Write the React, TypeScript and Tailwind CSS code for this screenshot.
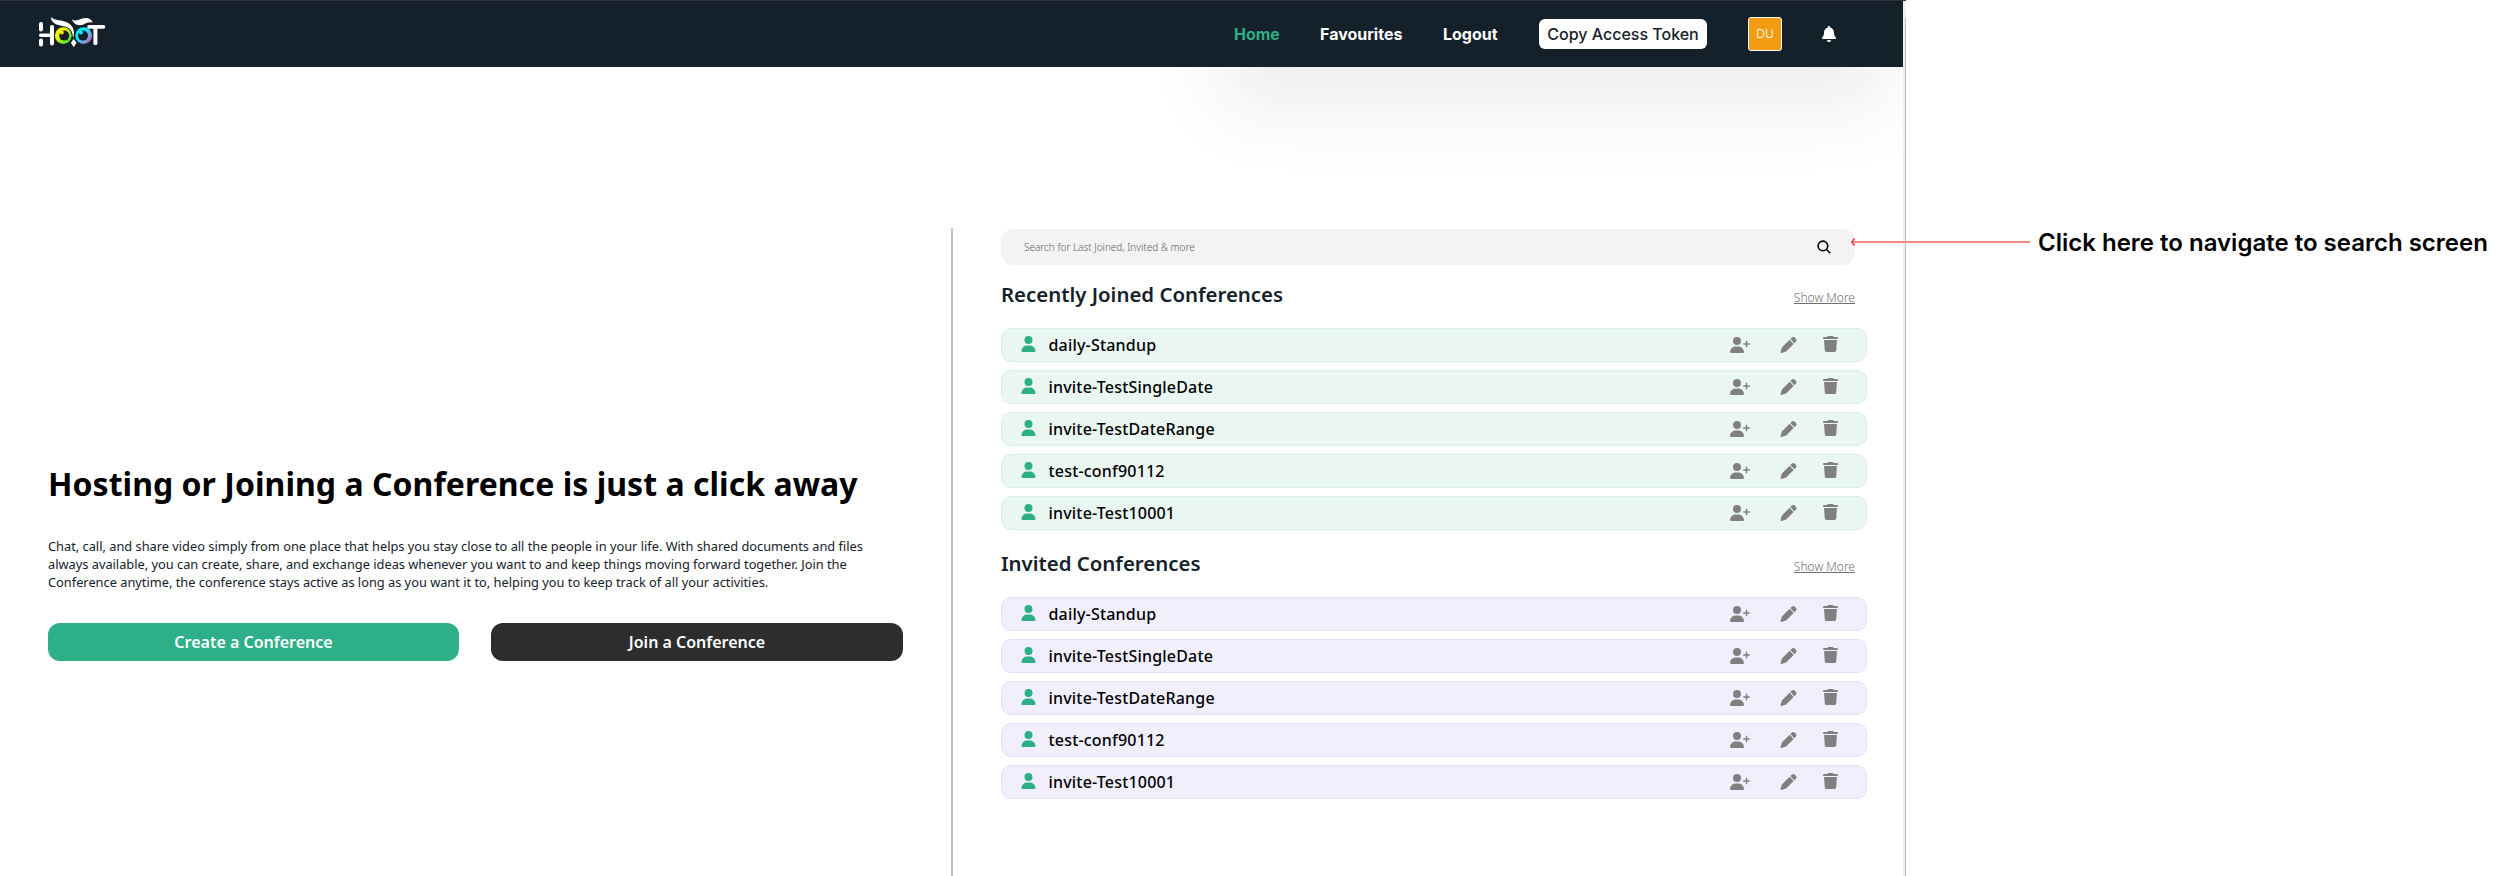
import { FaBell, FaPen, FaTrash, FaUser, FaUserPlus } from 'react-icons/fa6';

const conferences = ['daily-Standup', 'invite-TestSingleDate', 'invite-TestDateRange', 'test-conf90112', 'invite-Test10001'];

function Logo() {
  return (
    <svg width="70" height="34" viewBox="0 0 70 34" fill="none" aria-label="Hoot">
      <defs>
        <linearGradient id="eyeLeft" x1="20" y1="14" x2="34" y2="30" gradientUnits="userSpaceOnUse">
          <stop offset="0.3" stopColor="#f8f408" />
          <stop offset="0.7" stopColor="#7bea14" />
          <stop offset="1" stopColor="#19e035" />
        </linearGradient>
        <linearGradient id="eyeRight" x1="38" y1="14" x2="54" y2="30" gradientUnits="userSpaceOnUse">
          <stop offset="0.4" stopColor="#08ecf8" />
          <stop offset="0.7" stopColor="#7d9fdc" />
          <stop offset="0.95" stopColor="#e0489f" />
        </linearGradient>
      </defs>
      <g stroke="#fff" strokeWidth="4" strokeLinecap="round">
        <path d="M4 10v5.5M4 26.500v4" />
        <path d="M3.800 21.300H15" strokeWidth="3.600" />
        <path d="M15 13v16.500" />
        <path d="M52 12.900H66.500" strokeWidth="3.600" />
        <path d="M58.400 14V29.300" />
      </g>
      <circle cx="26.300" cy="21.600" r="8.400" fill="url(#eyeLeft)" />
      <circle cx="46.700" cy="21.600" r="8.400" fill="url(#eyeRight)" />
      <circle cx="27.200" cy="21.600" r="5" fill="#15212a" />
      <circle cx="46" cy="21.600" r="5" fill="#15212a" />
      <circle cx="24.800" cy="18.500" r="2" fill="#e9f20a" />
      <circle cx="44" cy="18.500" r="2" fill="#08ecf8" />
      <path
        d="M13.800 3c3.200 3 7.200 2.800 11.200 3.700C32 8.200 36.300 11.500 36.800 17.500c.1 2.500-.1 5-.6 6.500-.8-6-2-9.500-7.200-11.300C23 11 14.500 11.500 13.800 3Z"
        fill="#fff"
      />
      <path d="M36.700 25l2.800 3.700-2.800 4.500-2.800-4.500Z" fill="#fff" />
      <path d="M35 5.300c2.700 2.200 5.500 1.200 9-.2 4.500-1.700 9.500-1.700 11.800 3.400-4-.5-6.300.5-9.300 1.900-4.500 1.900-9.500.7-11.500-5.100Z" fill="#fff" />
    </svg>
  );
}

function Header() {
  return (
    <header className="relative flex h-[67px] w-[1903px] items-center border-t border-[#2e3140] bg-[#15212a] font-['Inter',sans-serif] text-base leading-6 text-white">
      <div className="mb-1.5 ml-[37px]">
        <Logo />
      </div>
      <nav className="ml-auto flex items-center">
        <a className="w-[86px] font-bold text-[#2db087]">Home</a>
        <a className="w-[123px] font-bold">Favourites</a>
        <a className="w-24 font-bold">Logout</a>
        <button className="h-[30px] w-[168px] rounded-[6px] bg-white font-medium text-[#15212a]">Copy Access Token</button>
        <div className="ml-[41px] flex h-[34px] w-[34px] items-center justify-center rounded-[3px] border border-white bg-[#f39c12] text-xs font-light">DU</div>
        <FaBell className="mr-[66px] ml-[39px] h-4 w-4" />
      </nav>
    </header>
  );
}

function SearchIcon() {
  return (
    <svg className="mr-px ml-auto" width="14" height="14" viewBox="0 0 14 14" fill="none" stroke="#000" strokeWidth="1.600">
      <circle cx="5.900" cy="5.900" r="4.800" />
      <path d="M9.300 9.300l4 4" />
    </svg>
  );
}

function ConferenceRow({ name, tone }: { name: string; tone: string }) {
  return (
    <li className={`flex h-[34px] items-center rounded-[10px] border ${tone}`}>
      <FaUser className="mb-0.5 ml-[19px] h-4 w-[15px] text-[#2db087]" />
      <span className="ml-[12.500px] text-base leading-6 font-medium tracking-[0.012em] text-black">{name}</span>
      <div className="ml-auto flex items-center text-[#808080]">
        <FaUserPlus className="h-4 w-5" />
        <FaPen className="ml-[30px] h-4 w-[17px]" />
        <FaTrash preserveAspectRatio="none" className="mr-[28px] mb-0.5 ml-[26px] h-4 w-[15px]" />
      </div>
    </li>
  );
}

function Section({ title, tone }: { title: string; tone: string }) {
  return (
    <section>
      <div className="flex h-[63px] w-[854px] items-start justify-between pt-[15px]">
        <h2 className="text-[20.400px] leading-7 font-semibold text-[#15212a]">{title}</h2>
        <a className="mt-[9px] text-xs leading-[18px] font-light text-[#707070] underline">Show More</a>
      </div>
      <ul className="flex flex-col gap-2">
        {conferences.map((name) => (
          <ConferenceRow key={name} name={name} tone={tone} />
        ))}
      </ul>
    </section>
  );
}

export default function App() {
  return (
    <div className="relative flex h-[876px] w-[2493px] overflow-hidden bg-white font-['Noto_Sans',sans-serif]">
      <div className="w-[1903px] shrink-0">
        <div className="absolute top-[67px] left-0 h-[120px] w-[1903px] overflow-hidden">
          <div className="absolute -top-[200px] left-[1219px] h-[200px] w-[668px] shadow-[0_42px_80px_rgba(0,0,0,0.07)]" />
        </div>
        <Header />
        <main className="flex h-[809px]">
          <div className="w-[951px] pt-[395px] pl-12">
            <h1 className="text-[32px] leading-[44px] font-bold tracking-[0.03px] whitespace-nowrap text-black">Hosting or Joining a Conference is just a click away</h1>
            <p className="mt-[31px] text-[12.800px] leading-[18px] whitespace-nowrap text-[#15212a]">
              Chat, call, and share video simply from one place that helps you stay close to all the people in your life. With shared documents and files
              <br />
              always available, you can create, share, and exchange ideas whenever you want to and keep things moving forward together. Join the
              <br />
              Conference anytime, the conference stays active as long as you want it to, helping you to keep track of all your activities.
            </p>
            <div className="mt-8 flex gap-8 text-base font-semibold text-white">
              <button className="h-[38px] w-[411px] rounded-[12px] bg-[#2db087]">Create a Conference</button>
              <button className="h-[38px] w-[412px] rounded-[12px] bg-[#2d2d2d]">Join a Conference</button>
            </div>
          </div>
          <div className="mt-[161px] w-[951px] border-l-2 border-[#c0c0c0] pt-px pl-12">
            <div className="w-[866px]">
              <div className="flex h-9 w-[854px] items-center rounded-[12px] bg-[#f3f3f3] pr-[23px] pl-[23px]">
                <span className="text-[10px] leading-4 font-light text-[#606060]">Search for Last Joined, Invited &amp; more</span>
                <SearchIcon />
              </div>
              <Section title="Recently Joined Conferences" tone="border-[#d5f0e6] bg-[#eaf6f2]" />
              <div className="mt-1">
                <Section title="Invited Conferences" tone="border-[#e4dffd] bg-[#f1effd]" />
              </div>
            </div>
          </div>
        </main>
      </div>
      <div className="h-full w-[3px] shrink-0 border-t border-[#2e3140] bg-[#f0f0f0] pt-[17px]">
        <div className="ml-auto h-full w-px bg-[#bdbdbd]" />
      </div>
      <p className="mt-[225px] ml-[132px] font-['Inter',sans-serif] text-2xl leading-9 font-semibold whitespace-nowrap text-black">Click here to navigate to search screen</p>
      <svg className="absolute top-[236px] left-[1850px]" width="181" height="12" viewBox="0 0 181 12" fill="none">
        <path d="M3 6H180" stroke="#f78787" strokeWidth="2" />
        <path d="M4.500 2.500L1.800 6l2.700 3.500" stroke="#ee2a2a" strokeWidth="1.300" />
      </svg>
    </div>
  );
}
